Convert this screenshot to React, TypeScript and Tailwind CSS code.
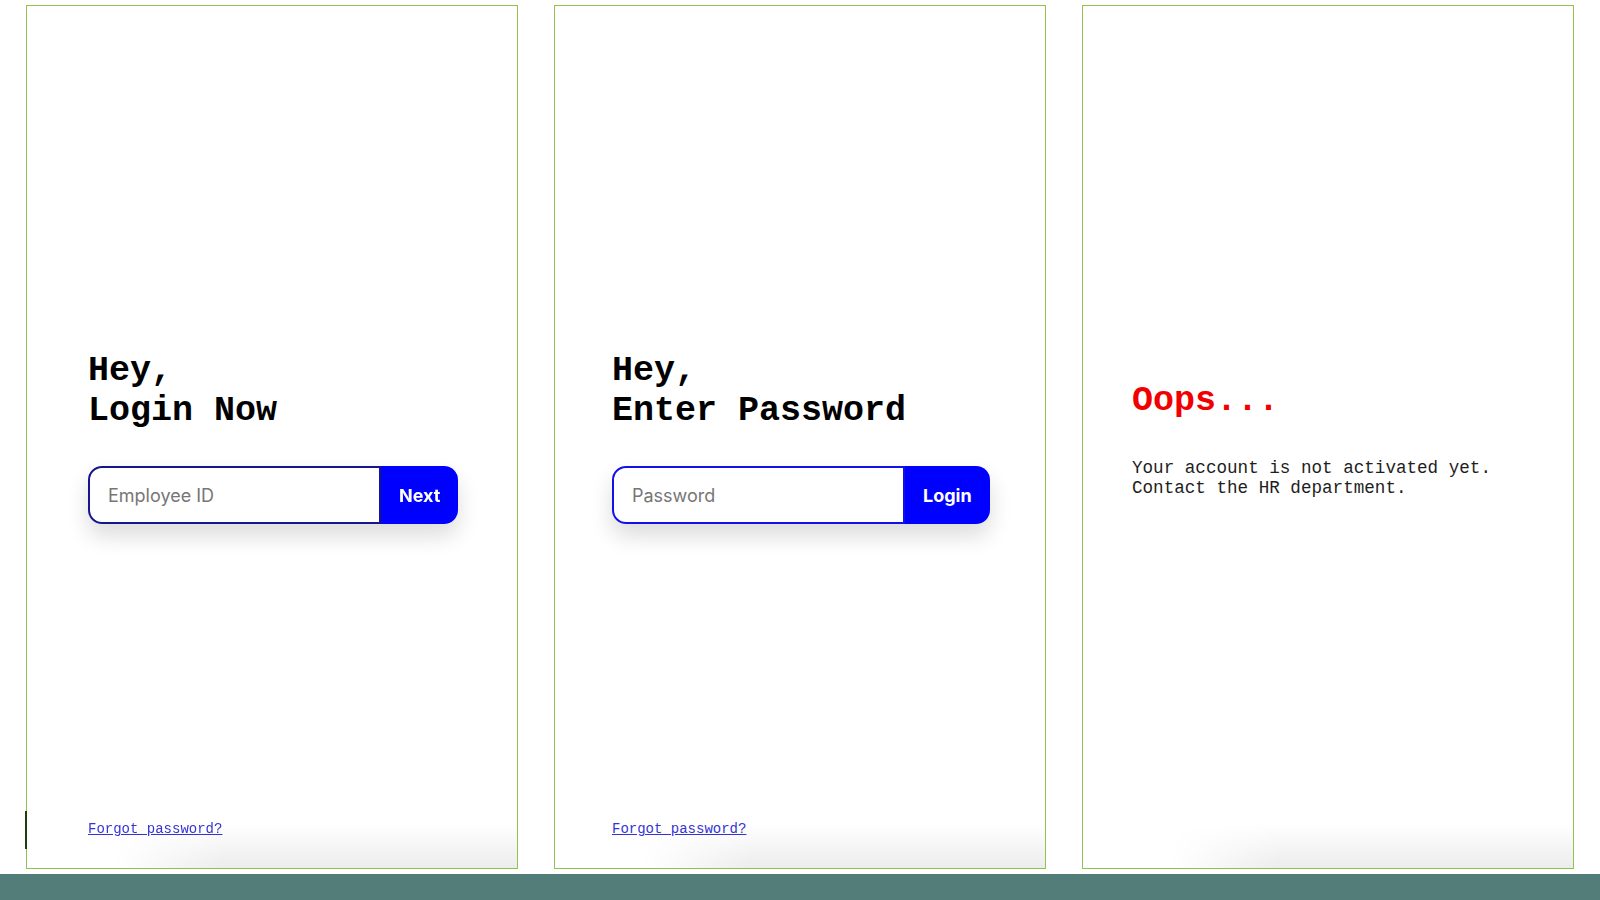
import * as React from 'react'

const mono = "font-['Liberation_Mono','Courier_New',monospace]"
const sans = "font-['Inter','Noto_Sans',sans-serif]"

interface LoginCardProps {
  line: string
  placeholder: string
  cta: string
  inputBorder: string
  className?: string
  focus?: boolean
  type?: string
  marker?: boolean
}

function BottomShade() {
  return (
    <div className="pointer-events-none absolute bottom-0 left-0 right-0 h-[44px] bg-[linear-gradient(to_top,rgba(0,0,0,0.075),rgba(0,0,0,0))] [mask-image:linear-gradient(to_right,transparent_18%,black_40%)]" />
  )
}

function LoginCard({
  line,
  placeholder,
  cta,
  inputBorder,
  className,
  focus,
  type = 'text',
  marker,
}: LoginCardProps) {
  return (
    <section
      className={`relative flex w-[492px] shrink-0 flex-col border border-[#93c150] bg-white pt-[345px] pb-[29px] ${className ?? ''}`}
    >
      {marker ? (
        <div className="absolute -left-[2px] top-[805px] h-[38px] w-[2px] bg-[#1f3d10]" />
      ) : null}
      <h1
        className={`${mono} text-[35px] font-bold leading-[40px] text-black`}
      >
        Hey,
        <br />
        {line}
      </h1>
      <form
        className="mt-[35px] flex w-fit rounded-[14px] shadow-[0_12px_22px_rgba(0,0,0,0.14)]"
        onSubmit={(e) => e.preventDefault()}
      >
        <input
          type={type}
          autoFocus={focus}
          placeholder={placeholder}
          className={`${sans} h-[58px] w-[293px] rounded-l-[14px] border-2 bg-white pl-[18px] text-[18px] text-black outline-none placeholder:text-[#767676] ${inputBorder}`}
        />
        <button
          type="submit"
          className={`${sans} h-[58px] rounded-r-[14px] bg-[#0000ff] px-[18px] text-[18px] font-bold text-white`}
        >
          {cta}
        </button>
      </form>
      <a
        href="#"
        className={`${mono} mt-auto w-fit text-[14px] leading-[20px] text-[#3535d6] underline`}
      >
        Forgot password?
      </a>
      <BottomShade />
    </section>
  )
}

function NoticeCard() {
  return (
    <section className="relative flex w-[492px] shrink-0 flex-col border border-[#93c150] bg-white pl-[49px] pt-[375px]">
      <h2
        className={`${mono} text-[35px] font-bold leading-[40px] text-[#f20000]`}
      >
        Oops...
      </h2>
      <p
        className={`${mono} mt-[37px] text-[17.6px] leading-[20px] text-[#1e1e1e]`}
      >
        Your account is not activated yet.
        <br />
        Contact the HR department.
      </p>
      <BottomShade />
    </section>
  )
}

export default function App() {
  return (
    <div className="flex h-[900px] w-[1600px] flex-col overflow-hidden bg-white">
      <main className="flex h-[869px] shrink-0 gap-[36px] px-[26px] pt-[5px]">
        <LoginCard
          line="Login Now"
          placeholder="Employee ID"
          cta="Next"
          inputBorder="border-[#15158c]"
          className="pl-[61px]"
          focus
          marker
        />
        <LoginCard
          line="Enter Password"
          placeholder="Password"
          cta="Login"
          type="password"
          inputBorder="border-[#1212e6]"
          className="pl-[57px]"
        />
        <NoticeCard />
      </main>
      <div className="mt-auto h-[26px] bg-[#527d78]" />
    </div>
  )
}
